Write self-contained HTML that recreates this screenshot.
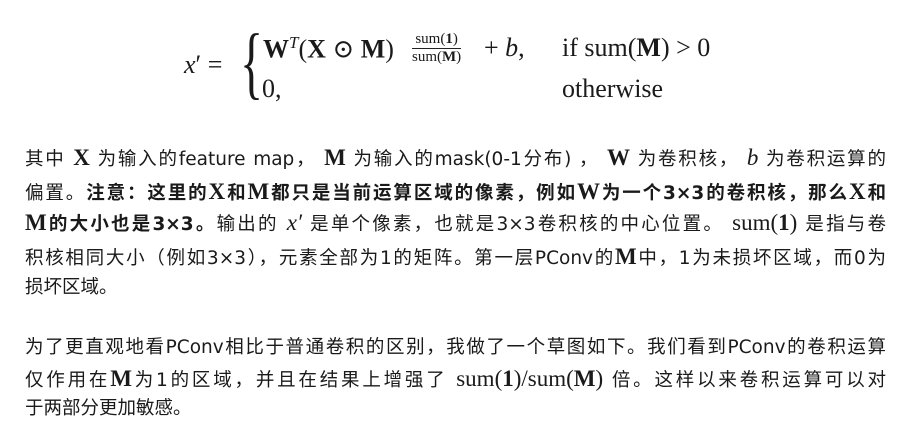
<!DOCTYPE html>
<html><head><meta charset="utf-8">
<style>
body{margin:0;width:908px;height:439px;background:#fff;position:relative;overflow:hidden;color:#1a1a1a;font-family:"DejaVu Sans","Noto Sans CJK SC",sans-serif;font-size:18.5px}
.m{font-family:"Liberation Serif","DejaVu Serif",serif;font-size:23px}
.b{font-weight:bold}
.ln{position:absolute;left:25px;width:861px;white-space:nowrap;line-height:30px;height:30px;text-align:justify;text-align-last:justify}
.last{text-align-last:left}
.f{position:absolute;font-family:"Liberation Serif","DejaVu Serif",serif;font-size:26px;white-space:nowrap}
</style></head><body>
<div class="f" style="left:184px;top:50px;font-style:italic">x<span style="font-style:normal">′</span> <span style="font-style:normal">=</span></div>
<div class="f" style="left:240px;top:18px;font-size:80px;line-height:90px;transform:scaleX(0.6);transform-origin:left">{</div>
<div class="f" style="left:263px;top:33px"><b>W</b><sup style="font-size:17px;font-style:italic">T</sup>(<b>X</b> ⊙ <b>M</b>)</div>
<div class="f" style="left:412px;top:31px;font-size:15px;text-align:center;line-height:17px"><div>sum(<b>1</b>)</div><div style="border-top:1px solid #222">sum(<b>M</b>)</div></div>
<div class="f" style="left:484px;top:33px">+ <i>b</i>,</div>
<div class="f" style="left:562px;top:33px">if sum(<b>M</b>) &gt; 0</div>
<div class="f" style="left:262px;top:74px">0,</div>
<div class="f" style="left:562px;top:74px">otherwise</div>

<div class="ln" style="top:143px">其中 <span class="m b">X</span> 为输入的feature map， <span class="m b">M</span> 为输入的mask(0-1分布) ， <span class="m b">W</span> 为卷积核， <i class="m">b</i> 为卷积运算的</div>
<div class="ln b" style="top:177px"><span style="font-weight:normal">偏置。</span>注意：这里的<span class="m">X</span>和<span class="m">M</span>都只是当前运算区域的像素，例如<span class="m">W</span>为一个3×3的卷积核，那么<span class="m">X</span>和</div>
<div class="ln" style="top:208px"><b><span class="m">M</span>的大小也是3×3。</b>输出的 <i class="m">x′</i> 是单个像素，也就是3×3卷积核的中心位置。 <span class="m">sum(<b>1</b>)</span> 是指与卷</div>
<div class="ln" style="top:242px">积核相同大小（例如3×3），元素全部为1的矩阵。第一层PConv的<span class="m b">M</span>中，1为未损坏区域，而0为</div>
<div class="ln last" style="top:273px">损坏区域。</div>

<div class="ln" style="top:333px">为了更直观地看PConv相比于普通卷积的区别，我做了一个草图如下。我们看到PConv的卷积运算</div>
<div class="ln" style="top:364px">仅作用在<span class="m b">M</span>为1的区域，并且在结果上增强了 <span class="m">sum(<b>1</b>)/sum(<b>M</b>)</span> 倍。这样以来卷积运算可以对</div>
<div class="ln last" style="top:394px">于两部分更加敏感。</div>
</body></html>
